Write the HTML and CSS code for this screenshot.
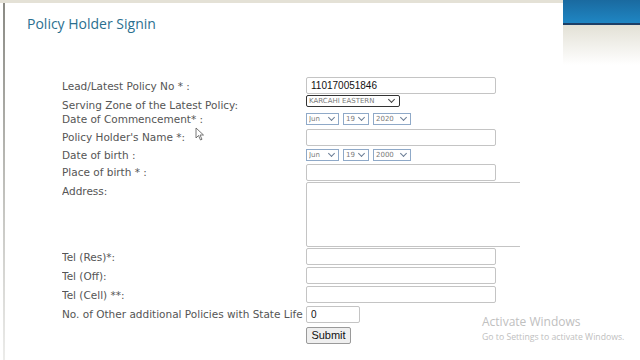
FILE: index.html
```html
<!DOCTYPE html>
<html lang="en">
<head>
    <meta charset="UTF-8">
    <title>Policy Holder Signin</title>
    <link rel="stylesheet" href="styles.css">
</head>
<body>
    <div class="page">
        <div class="main">
            <h1 class="title">Policy Holder Signin</h1>

            <form class="form">
                <div class="row">
                    <label>Lead/Latest Policy No * :</label>
                    <input type="text" class="field" value="110170051846">
                </div>
                <div class="row row-sm">
                    <label>Serving Zone of the Latest Policy:</label>
                    <div><span class="pick pick-zone"><select class="zone"><option>KARCAHI EASTERN</option></select></span></div>
                </div>
                <div class="row row-date">
                    <label>Date of Commencement* :</label>
                    <div class="dates">
                        <span class="pick"><select class="sel sel-m"><option>Jun</option></select></span>
                        <span class="pick"><select class="sel sel-d"><option>19</option></select></span>
                        <span class="pick"><select class="sel sel-y"><option>2020</option></select></span>
                    </div>
                </div>
                <div class="row row-name">
                    <label>Policy Holder's Name *:</label>
                    <input type="text" class="field">
                </div>
                <div class="row row-dob">
                    <label>Date of birth :</label>
                    <div class="dates">
                        <span class="pick"><select class="sel sel-m"><option>Jun</option></select></span>
                        <span class="pick"><select class="sel sel-d"><option>19</option></select></span>
                        <span class="pick"><select class="sel sel-y"><option>2000</option></select></span>
                    </div>
                </div>
                <div class="row row-name">
                    <label>Place of birth * :</label>
                    <input type="text" class="field">
                </div>
                <div class="row row-area">
                    <label>Address:</label>
                    <textarea class="area"></textarea>
                </div>
                <div class="row">
                    <label>Tel (Res)*:</label>
                    <input type="text" class="field">
                </div>
                <div class="row">
                    <label>Tel (Off):</label>
                    <input type="text" class="field">
                </div>
                <div class="row">
                    <label>Tel (Cell) **:</label>
                    <input type="text" class="field">
                </div>
                <div class="row row-count">
                    <label>No. of Other additional Policies with State Life</label>
                    <input type="text" class="field field-sm" value="0">
                </div>
                <div class="row row-btn">
                    <span></span>
                    <div><button type="button" class="btn">Submit</button></div>
                </div>
            </form>

            <svg class="cursor" width="10" height="14" viewBox="0 0 10 14">
                <path d="M1 1 L1 11 L3.5 8.5 L5.5 13 L7 12.3 L5 8 L8.5 8 Z" fill="#fff" stroke="#555" stroke-width="0.8"/>
            </svg>
        </div>

        <div class="side">
            <div class="side-bar"></div>
            <div class="side-fade"></div>
        </div>
    </div>

    <div class="activate">
        <div class="activate-title">Activate Windows</div>
        <div class="activate-sub">Go to Settings to activate Windows.</div>
    </div>
</body>
</html>
```

FILE: styles.css
```css
* {
    box-sizing: border-box;
    margin: 0;
    padding: 0;
}

body {
    width: 640px;
    height: 360px;
    overflow: hidden;
    background-color: white;
    font-family: 'DejaVu Sans', Verdana, sans-serif;
}

.page {
    display: flex;
    height: 360px;
}

.main {
    position: relative;
    width: 563px;
    border-top: 3px solid #e4e1d6;
    padding-left: 3px;
}

.main::before {
    content: "";
    position: absolute;
    left: 3px;
    top: 0;
    bottom: 0;
    width: 2px;
    background: linear-gradient(#8a8a84, #c8c8c4 60%, #ececea);
}

.title {
    font-family: 'Open Sans', sans-serif;
    font-weight: normal;
    font-size: 14px;
    color: #2b6f8f;
    margin: 11px 0 0 24px;
}

.form {
    margin: 43px 0 0 59px;
    overflow: hidden;
    width: 458px;
}

.row {
    display: grid;
    grid-template-columns: 244px 1fr;
    align-items: center;
    height: 19px;
}

.row-sm {
    height: 14px;
}

.row-date {
    height: 19px;
}

.row-name {
    height: 18px;
}

.row-dob {
    height: 17px;
}

.row-area {
    align-items: start;
    height: 66px;
}

.row-count {
    height: 20px;
}

.row-btn {
    height: 20px;
}

.row label {
    font-size: 10.5px;
    color: #555;
}

.row-area label {
    padding-top: 4px;
}

.field {
    width: 190px;
    height: 17px;
    border: 1px solid #c4c4c4;
    border-radius: 2px;
    padding: 0 4px;
    font-family: 'Liberation Sans', Arial, sans-serif;
    font-size: 10px;
    color: #111;
}

.field-sm {
    width: 54px;
}

.area {
    display: block;
    width: 240px;
    height: 65px;
    margin-top: 1px;
    border: 1px solid #c4c4c4;
    border-radius: 2px;
    resize: none;
}

.pick {
    position: relative;
    display: inline-block;
    vertical-align: top;
}

.pick::after {
    content: "";
    position: absolute;
    right: 5px;
    top: 2px;
    width: 4px;
    height: 4px;
    border-right: 1px solid #6a7d95;
    border-bottom: 1px solid #6a7d95;
    transform: rotate(45deg);
    pointer-events: none;
}

.pick-zone::after {
    border-color: #444;
    right: 6px;
}

.zone,
.sel {
    appearance: none;
    -webkit-appearance: none;
    display: block;
    height: 12px;
    background-color: white;
    font-family: 'DejaVu Sans', Verdana, sans-serif;
    font-size: 7px;
    line-height: 10px;
    color: #7a7a7a;
    padding: 0 2px;
}

.zone {
    width: 94px;
    border: 1px solid #333;
    border-radius: 2px;
}

.dates {
    display: flex;
    gap: 4px;
}

.sel {
    border: 1px solid #8fa9c8;
    border-radius: 0;
}

.sel-m {
    width: 33px;
}

.sel-d {
    width: 26px;
}

.sel-y {
    width: 38px;
}

.btn {
    height: 17px;
    width: 45px;
    border: 1px solid #9a9a9a;
    border-radius: 2px;
    background-color: #efefef;
    font-family: 'Liberation Sans', Arial, sans-serif;
    font-size: 11px;
    color: #111;
}

.cursor {
    position: absolute;
    left: 195px;
    top: 124px;
}

.side {
    flex: 1;
    display: flex;
    flex-direction: column;
}

.side-bar {
    height: 25px;
    background: linear-gradient(#1a6aa0, #1f86c3);
    border-bottom: 2px solid #1d3f66;
}

.side-fade {
    height: 40px;
    background: linear-gradient(#e3e1d6, #ffffff);
}

.activate {
    position: absolute;
    left: 482px;
    top: 313px;
    color: #c0c0c0;
    font-family: 'Open Sans', sans-serif;
}

.activate-title {
    font-size: 12px;
}

.activate-sub {
    font-size: 8.7px;
    margin-top: 1px;
}
```
